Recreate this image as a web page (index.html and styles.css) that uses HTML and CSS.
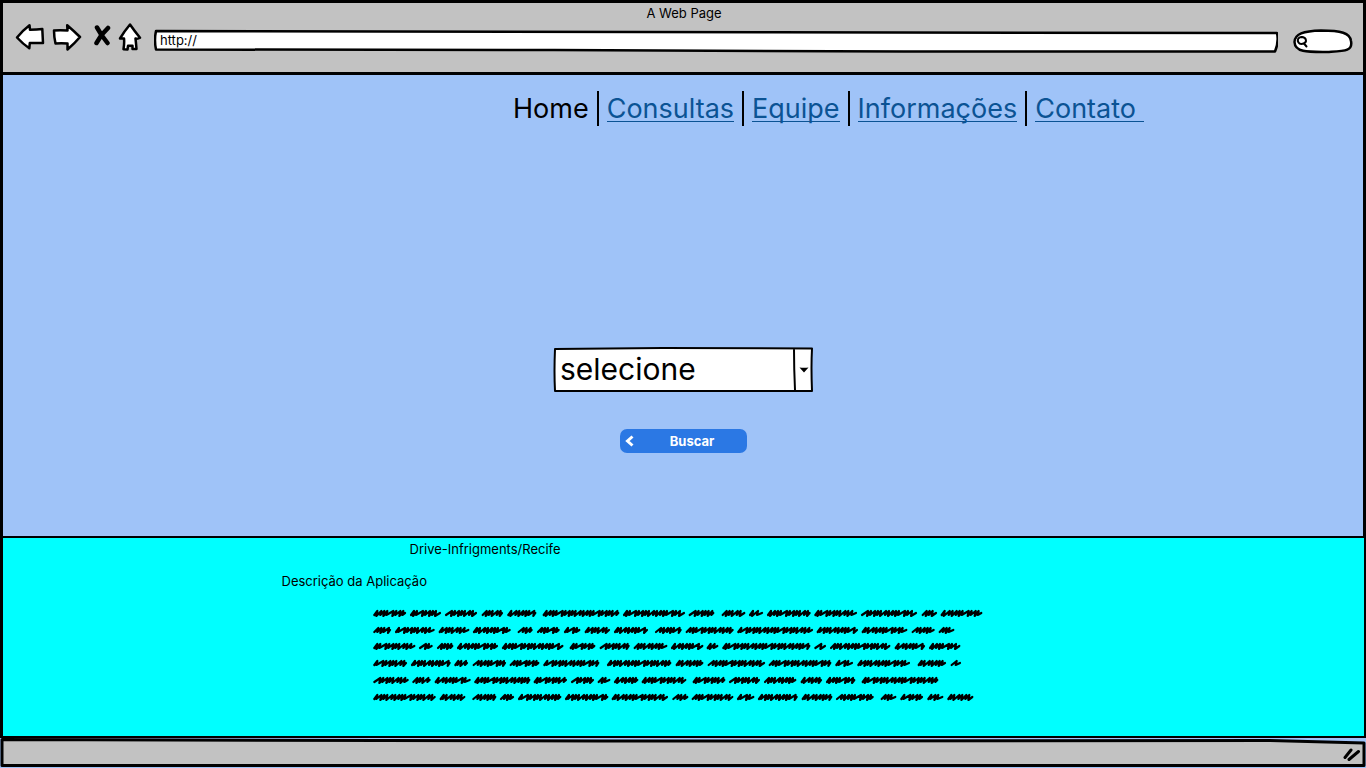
FILE: index.html
```html
<!DOCTYPE html>
<html lang="pt-BR">
<head>
<meta charset="utf-8">
<title>A Web Page</title>
<link rel="stylesheet" href="styles.css">
</head>
<body>
<div class="window">
  <header class="chrome">
    <div class="chrome-title">A Web Page</div>
    <div class="toolbar">
      <button class="tool tool-back" type="button" aria-label="Voltar">
        <svg width="30" height="28" viewBox="0 0 30 28"><path d="M2 14.500 Q7 8 14.500 2.200 L15 6.800 Q22 6.800 27.300 6 L28 20 Q20 20 14.800 20 L14.300 25.300 Q8 21 2 14.500Z"/></svg>
      </button>
      <button class="tool tool-forward" type="button" aria-label="Avançar">
        <svg width="30" height="28" viewBox="0 0 30 28"><path d="M2 7.500 Q8 7 15.500 7.500 L15.200 2.200 Q22 8 28 14 Q23 20 15.500 26.500 L15.500 20.500 Q9 20 3.500 20.500 Q2 14 2 7.500Z"/></svg>
      </button>
      <button class="tool tool-stop" type="button" aria-label="Parar">
        <svg width="18" height="28" viewBox="0 0 18 28"><path class="cross" d="M4 4.500 L8.500 12 L14.500 20 M15 5 L8.500 12 L3.500 20"/></svg>
      </button>
      <button class="tool tool-home" type="button" aria-label="Início">
        <svg width="24" height="28" viewBox="0 0 24 28"><path d="M12 1.500 Q16.500 8 22 14.800 Q20 16 17.500 15.500 Q18 20 18.500 26 L14.500 26 L14.500 22.800 L10 22.800 L9.500 26.500 L5.500 26.200 Q6.500 20 6 15.500 L2 15.500 Q6.500 8 12 1.500Z"/></svg>
      </button>
      <div class="address">
        <svg class="sketch" viewBox="0 0 1124 24" preserveAspectRatio="none" aria-hidden="true"><path d="M2 2 Q400 2 620 3.300 L1123 4 Q1125 13 1121 22.500 L750 22.500 L400 21 L2 20.500 Q0 11 2 2Z"/></svg>
        <input class="address-input" type="text" value="http://" aria-label="Endereço">
      </div>
      <div class="search">
        <svg class="sketch" viewBox="0 0 60 25" preserveAspectRatio="none" aria-hidden="true"><path d="M1.500 13 C2 5 10 2 28 1.500 C48 1.500 57 4 58 12 C60 22 52 22 36 23 C16 23 2 24 1.500 13Z"/></svg>
        <svg class="lens" width="12" height="14" viewBox="0 0 12 14" aria-hidden="true"><path d="M6 2 C2 2 1 5 2.500 7.500 C4 10 9.500 9 10 6 C10 3.500 8 2 5 2 M8 8.500 L10.500 11.500"/></svg>
        <input class="search-input" type="search" aria-label="Pesquisar">
      </div>
    </div>
  </header>

  <main class="page">
    <nav class="menu" aria-label="Principal">
      <span class="menu-item current" aria-current="page">Home</span>
      <span class="menu-item"><a href="#consultas">Consultas</a></span>
      <span class="menu-item"><a href="#equipe">Equipe</a></span>
      <span class="menu-item"><a href="#informacoes">Informações</a></span>
      <span class="menu-item"><a href="#contato">Contato&nbsp;</a></span>
    </nav>
    <form class="finder">
      <div class="combo">
        <svg class="sketch" viewBox="0 0 260 45" preserveAspectRatio="none" aria-hidden="true"><path d="M2 2 L110 1 L259 1.500 Q258 20 259 44 L2 44 Q1 25 2 2Z M241 2 Q241 22 242 43"/></svg>
        <select class="combo-select" aria-label="Selecione uma opção"><option>selecione</option></select>
        <svg class="combo-arrow" width="10" height="6" viewBox="0 0 10 6" aria-hidden="true"><path d="M0.500 0.500 Q5 1 9.500 0.500 L5 5.500Z"/></svg>
      </div>
      <button class="submit" type="button">
        <svg width="10" height="12" viewBox="0 0 10 12" aria-hidden="true"><path d="M7.500 1.500 L2.500 6 L7.500 10.500"/></svg>
        <span class="submit-label">Buscar</span>
      </button>
    </form>
  </main>

  <section class="about">
    <div class="about-inner">
      <h1 class="about-name">Drive-Infrigments/Recife</h1>
      <h2 class="about-heading">Descrição da Aplicação</h2>
      <svg class="scribble" width="612" height="98" viewBox="0 0 612 98" role="img" aria-label="Texto de exemplo"></svg>
    </div>
  </section>

  <footer class="status">
    <svg class="sketch" viewBox="0 0 1366 30" preserveAspectRatio="none" aria-hidden="true"><path d="M2 1.500 L600 3 L1270 2.500 L1364 5 L1364 27.500 L2 27.500Z"/></svg>
    <svg class="grip" width="18" height="14" viewBox="0 0 18 14" aria-hidden="true"><path d="M2 10.500 L8 3 M6 12.500 L15.500 4.500"/></svg>
  </footer>
</div>
<script src="scribble.js"></script>
</body>
</html>
```
FILE: styles.css
```css
* {
  box-sizing: border-box;
}

body {
  margin: 0;
  font-family: Inter, "Liberation Sans", sans-serif;
  font-size: 13px;
  line-height: 16px;
  color: #000;
}

button,
input,
select {
  margin: 0;
  padding: 0;
  border: 0;
  background: transparent;
  font: inherit;
  color: inherit;
}

.window {
  display: flex;
  flex-direction: column;
  min-height: 100vh;
  background: #9fc3f8;
}

.sketch {
  position: absolute;
  inset: 0;
  width: 100%;
  height: 100%;
  fill: #fff;
  stroke: #000;
  stroke-width: 2;
  stroke-linejoin: round;
}

.chrome {
  border: 3px solid #000;
  background: #c2c2c2;
  padding: 2px 10px 18px 12px;
}

.chrome-title {
  text-align: center;
}

.toolbar {
  display: flex;
  align-items: flex-start;
}

.tool {
  display: block;
  flex: none;
  margin-top: 2px;
}

.tool svg {
  display: block;
  fill: #fff;
  stroke: #000;
  stroke-width: 2.5;
  stroke-linejoin: round;
  stroke-linecap: round;
}

.tool .cross {
  fill: none;
  stroke-width: 4.5;
}

.tool-forward {
  margin-left: 7px;
}

.tool-stop {
  margin-left: 11px;
}

.tool-home {
  margin-left: 7px;
}

.address {
  position: relative;
  flex: 1;
  height: 24px;
  margin: 8px 15px 0 12px;
}

.address .sketch,
.search .sketch {
  stroke-width: 2.5;
}

.address-input {
  position: relative;
  display: block;
  width: 100%;
  height: 21px;
  padding-left: 6px;
}

.search {
  position: relative;
  width: 60px;
  height: 25px;
  margin-top: 8px;
}

.lens {
  position: absolute;
  left: 3px;
  top: 6px;
  fill: none;
  stroke: #000;
  stroke-width: 2;
  stroke-linecap: round;
}

.search-input {
  position: relative;
  width: 100%;
  height: 25px;
  padding: 0 8px 0 18px;
}

.page {
  flex: 1;
  border: solid #000;
  border-width: 0 3px;
}

.menu {
  display: flex;
  padding: 16px 0 0 37.5%;
  font-size: 27px;
  line-height: 35px;
}

.menu-item {
  padding-right: 8px;
}

.menu-item + .menu-item {
  border-left: 2px solid #000;
  padding-left: 8px;
}

.menu a {
  display: block;
  height: 31px;
  border-bottom: 1px solid #0b5394;
  color: #0b5394;
  text-decoration: none;
}

.finder {
  display: flex;
  flex-direction: column;
  align-items: center;
  gap: 37px;
  padding: 221px 0 82px;
}

.combo {
  position: relative;
  width: 260px;
  height: 45px;
}

.combo-select {
  position: relative;
  width: 100%;
  height: 43px;
  padding-left: 7px;
  appearance: none;
  font-size: 30px;
  line-height: 40px;
}

.combo-arrow {
  position: absolute;
  right: 4px;
  top: 20px;
}

.submit {
  display: flex;
  align-items: center;
  width: 127px;
  height: 24px;
  padding: 0 5px;
  border-radius: 7px;
  background: #2b78e4;
  color: #fff;
  font-weight: 700;
}

.submit svg {
  fill: none;
  stroke: #fff;
  stroke-width: 3;
}

.submit-label {
  flex: 1;
  padding-left: 8px;
  text-align: center;
}

.about {
  border: solid #000;
  border-width: 2px 2px 2px 3px;
  background: #0ff;
}

.about-inner {
  width: 804px;
  max-width: 100%;
  margin: 0 auto;
  padding: 3px 0 31px;
}

.about-name,
.about-heading {
  margin: 0;
  font-size: 13px;
  font-weight: 400;
}

.about-name {
  padding-left: 128px;
}

.about-heading {
  padding-top: 16px;
}

.scribble {
  display: block;
  margin: 18px 0 0 91px;
  fill: none;
  stroke: #000;
  stroke-width: 2.2;
  stroke-linecap: round;
  stroke-linejoin: round;
}

.status {
  position: relative;
  display: flex;
  justify-content: flex-end;
  height: 30px;
  padding: 9px 5px 0 0;
}

.status .sketch {
  fill: #c2c2c2;
  stroke-width: 3;
}

.grip {
  position: relative;
  fill: none;
  stroke: #000;
  stroke-width: 3;
  stroke-linecap: round;
}
```
FILE: scribble.js
```js
// Start and end of each scribbled word, in thirds of a pixel.
const lines = [
  [25,120,135,225,240,333,350,411,427,511,533,760,774,957,971,1045,1070,1138,1152,1191,1206,1334,1348,1473,1488,1653,1670,1713,1727,1849],
  [25,75,90,206,221,310,324,434,458,500,516,581,597,643,659,732,747,846,870,947,962,1103,1117,1341,1355,1476,1490,1624,1640,1706,1721,1765],
  [25,148,162,200,216,262,276,396,411,592,614,688,704,791,806,904,918,1012,1025,1057,1072,1333,1348,1380,1395,1573,1589,1677,1692,1783],
  [25,123,138,254,268,306,323,420,434,520,535,700,726,916,932,1012,1028,1197,1211,1396,1411,1461,1477,1632,1658,1740,1757,1785],
  [25,128,142,194,209,314,328,493,506,603,618,684,698,733,747,817,830,961,983,1078,1092,1182,1197,1291,1307,1368,1383,1468,1490,1717],
  [25,209,224,298,322,391,405,444,459,586,600,727,740,906,922,967,980,1102,1116,1165,1179,1295,1310,1399,1413,1523,1547,1591,1606,1671,1687,1732,1747,1822]
];
const baselines = [6, 23, 39, 56, 73, 90];
const steps = [3, 4, 3, 3, 6, 3, 4, 3, 3, 5];
const svg = document.querySelector(".scribble");

lines.forEach((words, row) => {
  const y = baselines[row];
  for (let i = 0; i < words.length; i += 2) {
    let x = words[i] / 3 - 7;
    const end = words[i + 1] / 3 - 9;
    let d = `M${x} ${y + 2}`;
    let n = i + row;
    while (x + 3 < end) {
      const step = Math.min(steps[n++ % steps.length], end - x);
      x += step;
      d += ` L${x} ${y - 2} L${x - 1} ${y + 2 + n % 2}`;
    }
    d += ` L${end + 1} ${y}`;
    const path = document.createElementNS("http://www.w3.org/2000/svg", "path");
    path.setAttribute("d", d);
    svg.append(path);
  }
});
```
